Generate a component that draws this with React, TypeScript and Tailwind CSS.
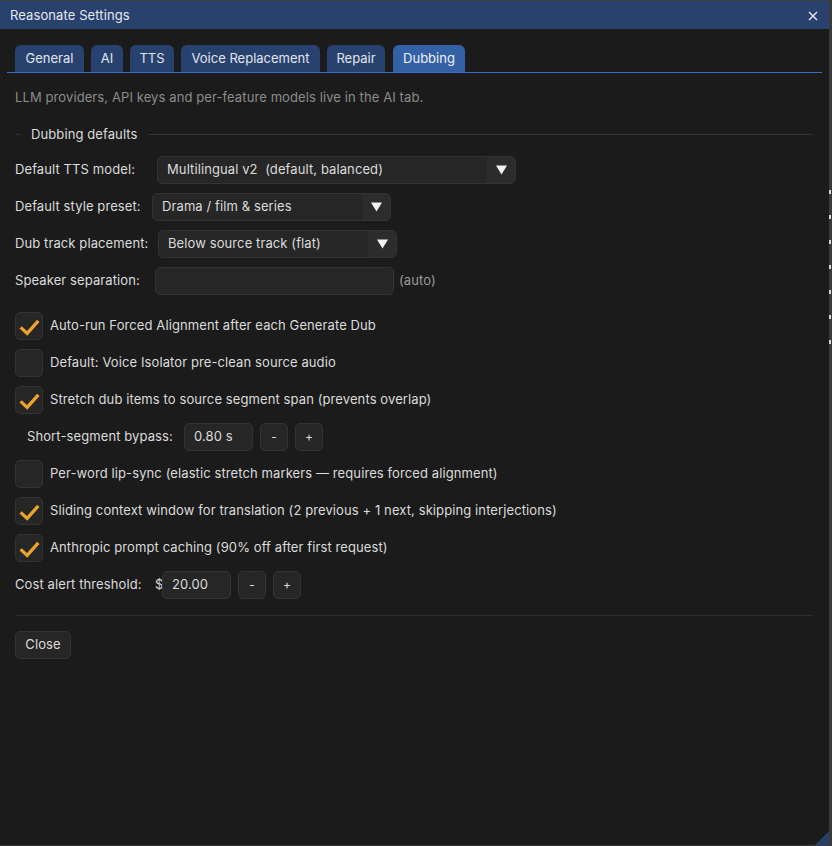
import React from "react";

const tabs = [
  { label: "General", w: "w-[69px]" },
  { label: "AI", w: "w-[32px]" },
  { label: "TTS", w: "w-[44px]" },
  { label: "Voice Replacement", w: "w-[139px]" },
  { label: "Repair", w: "w-[58px]" },
  { label: "Dubbing", w: "w-[72px]" },
];

const Check = ({ on }: { on: boolean }) => (
  <div className="flex h-[28px] w-[28px] shrink-0 items-center justify-center rounded-[5px] border border-[#333333] bg-[#262626]">
    {on && (
      <svg width="28" height="28" viewBox="0 0 28 28">
        <polyline points="5,15.5 12,22 24,8.5" fill="none" stroke="#eba22f" strokeWidth="3.6" strokeLinejoin="miter" />
      </svg>
    )}
  </div>
);

const CheckRow = ({ on, label }: { on: boolean; label: string }) => (
  <div className="flex h-[28px] items-center gap-[7px]">
    <Check on={on} />
    <span>{label}</span>
  </div>
);

const Combo = ({ value, width }: { value: string; width: string }) => (
  <div className={`flex h-[28px] items-stretch overflow-hidden rounded-[5px] border border-[#333333] bg-[#262626] ${width}`}>
    <div className="flex flex-1 items-center whitespace-pre pl-[9px]">{value}</div>
    <div className="flex w-[28px] items-center justify-center bg-[#2c2c2c]">
      <svg width="11" height="10" viewBox="0 0 11 10">
        <polygon points="0,0.5 11,0.5 5.5,9.5" fill="#f2f2f2" />
      </svg>
    </div>
  </div>
);

const SmallBtn = ({ label }: { label: string }) => (
  <div className="flex h-[28px] w-[28px] items-center justify-center rounded-[5px] border border-[#333333] bg-[#262626] text-[12px]">
    {label}
  </div>
);

const SpinBox = ({ value }: { value: string }) => (
  <div className="flex h-[28px] w-[69px] items-center rounded-[5px] border border-[#333333] bg-[#262626] pl-[9px]">
    {value}
  </div>
);

export default function App() {
  return (
    <div
      className="flex h-[846px] w-[832px] bg-[#2b2b2b] text-[13px] tracking-[0.1px] text-[#dcdcdc]"
      style={{ fontFamily: "Inter, 'Noto Sans', sans-serif" }}
    >
      {/* Dialog window */}
      <div className="flex h-[846px] w-[829px] flex-col border-t border-b border-[#3c3c3c] bg-[#1b1b1b]">
        {/* Title bar */}
        <div className="flex h-[28px] shrink-0 items-center justify-between bg-[#29416d] pl-[10px] pr-[11px] pt-[2px] text-[#e6e9ef]">
          <span>Reasonate Settings</span>
          <svg width="10" height="10" viewBox="0 0 10 10">
            <path d="M1 1 L9 9 M9 1 L1 9" stroke="#e6e9ef" strokeWidth="1.4" />
          </svg>
        </div>

        {/* Tabs */}
        <div className="ml-[7px] mt-[16px] flex w-[815px] gap-[7px] border-b border-[#3b6cc0] pl-[8px]">
          {tabs.map((t) => (
            <div
              key={t.label}
              className={`flex h-[27px] items-center justify-center rounded-t-[6px] pt-[1px] tracking-normal ${t.w} ${
                t.label === "Dubbing" ? "ml-[1px] bg-[#3461a6] text-[#eef1f6]" : "bg-[#284270] text-[#e1e5ec]"
              }`}
            >
              {t.label}
            </div>
          ))}
        </div>

        <div className="flex flex-col px-[15px]">
          <div className="mt-[16px] leading-[16px] text-[#8c8c8c]">
            LLM providers, API keys and per-feature models live in the AI tab.
          </div>

          {/* Group header */}
          <div className="mt-[21px] flex items-center pr-[1px]">
            <div className="h-px w-[6px] bg-[#333333]" />
            <span className="px-[10px] leading-[16px]">Dubbing defaults</span>
            <div className="h-px flex-1 bg-[#333333]" />
          </div>

          <div className="mt-[14px] flex flex-col gap-[9px]">
            <div className="flex items-center">
              <span className="w-[142px]">Default TTS model:</span>
              <Combo value="Multilingual v2  (default, balanced)" width="w-[359px]" />
            </div>
            <div className="flex items-center">
              <span className="w-[137px]">Default style preset:</span>
              <Combo value="Drama / film & series" width="w-[239px]" />
            </div>
            <div className="flex items-center">
              <span className="w-[143px]">Dub track placement:</span>
              <Combo value="Below source track (flat)" width="w-[239px]" />
            </div>
            <div className="flex items-center">
              <span className="w-[140px]">Speaker separation:</span>
              <div className="h-[28px] w-[239px] rounded-[5px] border border-[#333333] bg-[#262626]" />
              <span className="ml-[5px] text-[#9a9a9a]">(auto)</span>
            </div>

            <div className="mt-[8px] flex flex-col gap-[9px]">
              <CheckRow on label="Auto-run Forced Alignment after each Generate Dub" />
              <CheckRow on={false} label="Default: Voice Isolator pre-clean source audio" />
              <CheckRow on label="Stretch dub items to source segment span (prevents overlap)" />
              <div className="flex h-[28px] items-center pl-[12px]">
                <span className="w-[157px]">Short-segment bypass:</span>
                <SpinBox value="0.80 s" />
                <div className="ml-[7px] flex gap-[7px]">
                  <SmallBtn label="-" />
                  <SmallBtn label="+" />
                </div>
              </div>
              <CheckRow on={false} label="Per-word lip-sync (elastic stretch markers — requires forced alignment)" />
              <CheckRow on label="Sliding context window for translation (2 previous + 1 next, skipping interjections)" />
              <CheckRow on label="Anthropic prompt caching (90% off after first request)" />
              <div className="flex h-[28px] items-center">
                <span className="w-[140px]">Cost alert threshold:</span>
                <span className="w-[7px]">$</span>
                <SpinBox value="20.00" />
                <div className="ml-[7px] flex gap-[7px]">
                  <SmallBtn label="-" />
                  <SmallBtn label="+" />
                </div>
              </div>
            </div>
          </div>

          <div className="mt-[16px] h-px w-[798px] bg-[#2e2e2e]" />

          <div className="mt-[15px] flex h-[28px] w-[56px] items-center justify-center rounded-[5px] border border-[#333333] bg-[#262626]">
            Close
          </div>
        </div>

        <div className="flex-1" />
        <div className="flex justify-end">
          <svg width="14" height="14" viewBox="0 0 14 14">
            <polygon points="14,0 14,14 0,14" fill="#2a3f66" />
          </svg>
        </div>
      </div>

      {/* Background strip to the right */}
      <div className="flex w-[3px] flex-col bg-[#3a3a3a] pt-[190px]">
        {[0, 1, 2, 3, 4, 5, 6].map((i) => (
          <div key={i} className="mb-[21px] h-[4px] w-[2px] bg-[#d8d8d8]" />
        ))}
      </div>
    </div>
  );
}
